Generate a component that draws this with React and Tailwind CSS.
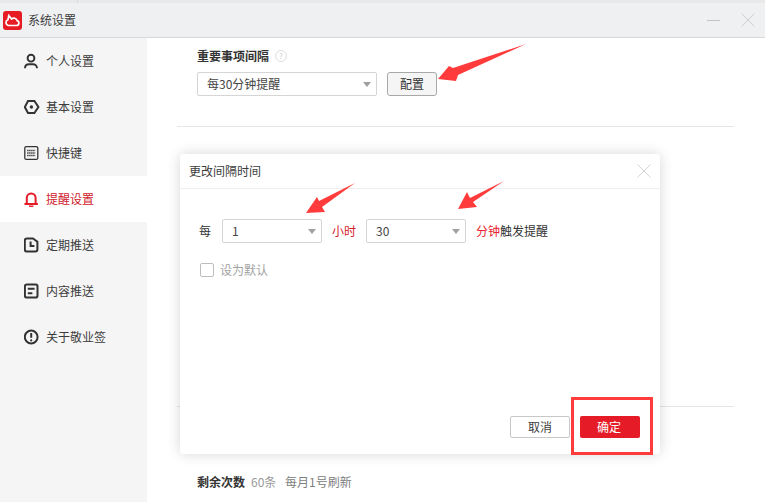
const font = { fontFamily: '"Noto Sans CJK SC", "Liberation Sans", sans-serif' };

function Icon({ children, color = '#333333' }) {
  return (
    <svg width="16" height="16" viewBox="0 0 16 16" fill="none" stroke={color} strokeWidth="2" className="shrink-0">
      {children}
    </svg>
  );
}

const items = [
  { label: '个人设置', icon: <Icon><circle cx="7" cy="5.2" r="3.4" strokeWidth="1.9" /><path d="M1 15.2c0-2.8 2-4 4-4h4c2 0 4 1.2 4 4" strokeWidth="1.9" /></Icon> },
  { label: '基本设置', icon: <Icon><path d="M4 2h6.4L14.4 8l-4 6H4L0.8 8z" /><circle cx="7.4" cy="8" r="1.7" fill="#333333" stroke="none" /></Icon> },
  { label: '快捷键', icon: <Icon><rect x="0.8" y="1.6" width="13" height="12.8" rx="1.5" strokeWidth="1.3" /><path d="M3.2 5.5h8.2M3.2 8h8.2M3.2 10.5h8.2" strokeWidth="1.3" strokeDasharray="1.4 0.6" /></Icon> },
  { label: '提醒设置', active: true, icon: <Icon color="#e61b28"><path d="M2.8 13V6.8a4.4 4.4 0 0 1 8.8 0V13" /><path d="M0.5 13h13.4" /><path d="M5 15.2h4.4" strokeWidth="1.4" /></Icon> },
  { label: '定期推送', icon: <Icon><path d="M2.8 1.4h6.2l4.4 3.4v7.8a2 2 0 0 1-2 2H2.8a2 2 0 0 1-2-2V3.4a2 2 0 0 1 2-2z" /><path d="M6.6 4.6V9h3.8" /></Icon> },
  { label: '内容推送', icon: <Icon><rect x="0.9" y="1.4" width="12.6" height="13.2" rx="1.8" /><path d="M3.8 5.8h6.8M3.8 10.2h4.6" /></Icon> },
  { label: '关于敬业签', icon: <Icon><circle cx="7.2" cy="8" r="6.4" /><path d="M7.2 4v4.8" /><circle cx="7.2" cy="11.4" r="1.1" fill="#333333" stroke="none" /></Icon> },
];

function Select({ value, width }) {
  return (
    <div className={`${width} h-6 flex items-center justify-between pl-[9px] pr-[5px] bg-white border border-[#d5d5d5] rounded-[2px] text-[12px] text-[#444444]`}>
      <span>{value}</span>
      <span className="w-0 h-0 border-x-[4px] border-x-transparent border-t-[5px] border-t-[#a0a0a0]" />
    </div>
  );
}

export default function App() {
  return (
    <div style={font} className="relative w-[765px] h-[502px] overflow-hidden bg-white flex flex-col text-[12px] text-[#333333]">
      <div className="h-[3px] bg-[#e9e9e9]">
        <div className="ml-[77px] w-px h-[3px] bg-[#d8d8d8]" />
      </div>
      <header className="h-[35px] shrink-0 flex items-center justify-between bg-[#eff0f2] border-b border-[#d8d8d8]">
        <div className="flex items-center">
          <div className="ml-[3px] w-[19px] h-[19px] rounded-[3px] bg-[#e61b23] flex items-center justify-center">
            <svg width="15" height="13" viewBox="0 0 15 13" fill="none" stroke="#fff" strokeWidth="1.7">
              <path d="M3.5 11.5h8a2.5 2.5 0 0 0 .6-4.9A3.5 3.5 0 0 0 6.5 5L3.8 1.5 3 5.7a3 3 0 0 0 .5 5.8z" />
            </svg>
          </div>
          <span className="ml-[6px] text-[#3c3c3c]">系统设置</span>
        </div>
        <div className="flex items-center gap-[21px] pr-[10px]">
          <div className="w-[13px] h-px bg-[#c4c4c4]" />
          <svg width="14" height="14" viewBox="0 0 14 14" stroke="#cfcfcf" strokeWidth="1"><path d="M0.5 0.5 13.5 13.5M13.5 0.5 0.5 13.5" /></svg>
        </div>
      </header>

      <div className="flex-1 flex min-h-0">
        <nav className="w-[147px] shrink-0 bg-[#f5f5f5]">
          {items.map((it) => (
            <div key={it.label} className={`h-[46px] flex items-center gap-[6px] pl-6 ${it.active ? 'bg-white text-[#d0212c]' : 'text-[#3c3c3c]'}`}>
              {it.icon}
              <span>{it.label}</span>
            </div>
          ))}
        </nav>

        <main className="flex-1 min-w-0 pl-[30px] pr-[31px]">
          <div className="pl-[20px] pt-[9px]">
            <div className="h-[18px] flex items-center gap-[6px]">
              <span className="font-bold text-[#333333]">重要事项间隔</span>
              <span className="w-3 h-3 rounded-full border border-[#dddddd] text-[8px] leading-none text-[#cccccc] flex items-center justify-center">?</span>
            </div>
            <div className="mt-[7px] flex gap-[10px]">
              <Select value="每30分钟提醒" width="w-[180px]" />
              <div className="w-[50px] h-6 flex items-center justify-center bg-[#f5f5f5] border border-[#a8a8a8] rounded-[3px] text-[#333333]">配置</div>
            </div>
          </div>
          <div className="mt-[30px] h-px bg-[#e6e6e6]" />
          <div className="mt-[279px] h-px bg-[#e6e6e6]" />
          <div className="mt-[66px] pl-[20px] flex items-center h-[18px]">
            <span className="font-bold text-[#333333] w-[54px]">剩余次数</span>
            <span className="text-[#999999] w-[34px]">60条</span>
            <span className="text-[#808080]">每月1号刷新</span>
          </div>
        </main>
      </div>

      <section className="absolute left-[180px] top-[154px] w-[480px] h-[300px] bg-white rounded-[2px] shadow-[0_0_14px_rgba(0,0,0,0.16)] flex flex-col">
        <div className="h-[35px] shrink-0 flex items-center justify-between pl-[9px] pr-[9px] border-b border-[#eeeeee]">
          <span className="text-[#3c3c3c]">更改间隔时间</span>
          <svg width="14" height="14" viewBox="0 0 14 14" stroke="#d4d4d4" strokeWidth="1"><path d="M0.5 0.5 13.5 13.5M13.5 0.5 0.5 13.5" /></svg>
        </div>
        <div className="flex-1 pl-[19px] pt-[30px]">
          <div className="flex items-center h-6">
            <span className="w-[23px]">每</span>
            <Select value="1" width="w-[100px]" />
            <span className="ml-[10px] w-[34px] text-[#d8222b]">小时</span>
            <Select value="30" width="w-[100px]" />
            <span className="ml-[10px] text-[#e8242c]">分钟</span>
            <span>触发提醒</span>
          </div>
          <div className="mt-[18px] flex items-center gap-[6px] text-[#a3a3a3]">
            <span className="w-[14px] h-[14px] ml-px border border-[#bdbdbd] rounded-[2px] bg-white" />
            <span>设为默认</span>
          </div>
        </div>
        <div className="flex justify-end gap-[10px] pr-[20px] pb-[16px]">
          <div className="w-[60px] h-[22px] flex items-center justify-center border border-[#c8c8c8] rounded-[2px] text-[#3c3c3c] bg-white">取消</div>
          <div className="w-[60px] h-[22px] flex items-center justify-center pr-[2px] rounded-[2px] bg-[#e61b28] text-white">确定</div>
        </div>
      </section>

      <div className="absolute left-[571px] top-[397px] w-[82px] h-[58px] border-[3px] border-[#ff3b3b]" />
      <svg className="absolute left-0 top-0 pointer-events-none" width="765" height="502" viewBox="0 0 765 502" fill="#ff3b3b">
        <path d="M526 44 L453 68 L449 66 L438 79 L456 81 L458 75 Z" />
        <path d="M355 183 L319 201 L317 197 L306 213 L325 212 L322 207 Z" />
        <path d="M504 181 L470 198 L467 192 L458 209 L477 207 L473 202 Z" />
      </svg>
    </div>
  );
}
